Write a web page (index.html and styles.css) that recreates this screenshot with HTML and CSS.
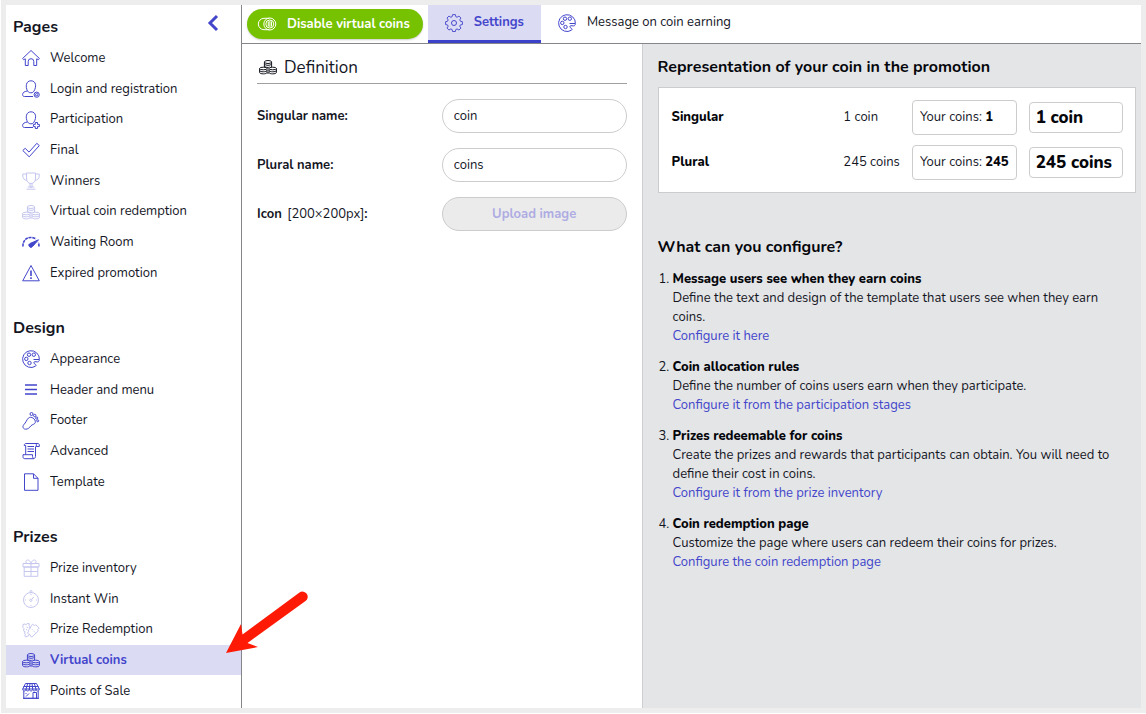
FILE: index.html
```html
<!DOCTYPE html>
<html lang="en">
<head>
    <meta charset="UTF-8">
    <meta name="viewport" content="width=device-width, initial-scale=1.0">
    <title>Virtual coins</title>
    <link rel="stylesheet" href="styles.css">
</head>
<body>
    <svg class="sprite" aria-hidden="true">
        <symbol id="i-home" viewBox="0 0 18 18"><path d="M.6 9.500 9 1.500l8.400 8-1 1.200-1.700-.9V16.500h-2.900V12.500a2.800 2.800 0 0 0-5.600 0v4H3.300V9.800l-1.700.9z"/></symbol>
        <symbol id="i-user" viewBox="0 0 18 18"><path d="M11 16.500H2.500C1 16.500.6 15.500.6 14.500c0-2.200 2-3 4.400-3.400M5.500 11C3.200 6.500 4 .8 9 .8s5.800 5.700 3 10.200M5.500 11c1 1.500 2.500 1.800 3.500 1.800 1.500 0 2.500-.8 3-1.800"/></symbol>
        <symbol id="i-login" viewBox="0 0 18 18"><use href="#i-user"/><circle cx="14.700" cy="14.700" r="2.600"/><circle cx="14.700" cy="14.700" r="1.200"/></symbol>
        <symbol id="i-join" viewBox="0 0 18 18"><use href="#i-user"/><path d="M13.300 11.500h2.200v1.900h1.900v2.200h-1.900v1.900h-2.200v-1.900h-1.900v-2.200h1.900z"/></symbol>
        <symbol id="i-check" viewBox="0 0 18 18"><path d="m.8 9.500 2.400-2.200 3.800 3.800L14.800 2.300l2.500 2.300L7.200 15.800z"/></symbol>
        <symbol id="i-cup" viewBox="0 0 18 18"><path d="M4.500 1h9v5c0 3.500-1.500 5.500-4.500 5.500S4.500 9.500 4.500 6zM4.500 2H.8v2c0 2.500 1.700 4 4.200 4.500M13.500 2h3.700v2c0 2.500-1.700 4-4.200 4.500M8 11.500v3.500h2v-3.500M5.800 15h6.400M4.500 17.200h9"/></symbol>
        <symbol id="i-coins" viewBox="0 0 18 18"><ellipse cx="9" cy="4" rx="3.600" ry="1.500"/><path d="M5.400 4v5M12.600 4v5M5.400 6c1 1.800 6.200 1.800 7.200 0M5.400 8c1 1.500 4 1.900 5.200 1"/><ellipse cx="4.300" cy="10.500" rx="3.700" ry="1.300"/><path d="M.6 10.500v4c0 1.800 7.400 1.800 7.400 0v-4M.6 12.500c0 1.700 7.400 1.700 7.400 0"/><ellipse cx="13.700" cy="10.500" rx="3.700" ry="1.300"/><path d="M10 10.500v4c0 1.800 7.400 1.800 7.400 0v-4M10 12.500c0 1.700 7.400 1.700 7.400 0M8 15h2"/></symbol>
        <symbol id="i-gauge" viewBox="0 0 18 18"><path d="M.9 13.500C.9 7.500 4.300 4.500 9 4.500c2 0 3.700.6 4.900 1.500M17 13.500c0-1.600-.2-2.800-.7-4" stroke-width="1.600" stroke-dasharray="3 .7"/><path d="M16.500 6.800 8 10.500a2 2 0 1 0 2.500 3z" fill="currentColor"/></symbol>
        <symbol id="i-warn" viewBox="0 0 18 18"><path d="M9 1.500 17.300 16.800H.7z"/><path d="M9 6.500v5.500M9 13.300v1.700" stroke-width="1.600"/></symbol>
        <symbol id="i-palette" viewBox="0 0 18 18"><path d="M17.400 9.500A8.400 8.400 0 1 0 13.500 16.200c.9-.6.500-1.600-.5-2.100-1.500-.8-1.500-2.200-.2-2.400l2.700.2c1.300 0 1.900-1 1.900-2.400z"/><circle cx="7" cy="4.700" r="1.700"/><circle cx="11.800" cy="4.700" r="1.700"/><circle cx="4.300" cy="8.900" r="1.700"/><circle cx="7.500" cy="13" r="1.700"/><path d="M11.500 9.500h5.500"/></symbol>
        <symbol id="i-menu" viewBox="0 0 18 18"><path d="M3 4h12M3 8.500h12M3 13h12" stroke-width="1.700"/></symbol>
        <symbol id="i-foot" viewBox="0 0 18 18"><path d="M6.500 6C9 3.800 14 7 13.300 10.500c-.5 2-3 1.800-4.300 3.200-1.500 2-3 3.600-5.500 3.500C1 17 .2 14.500 1.700 12.800 4 10.500 4.500 8 6.500 6z"/><circle cx="9.500" cy="2" r="1.500"/><circle cx="12.700" cy="3.500" r="1.200"/><circle cx="14.700" cy="6" r="1.100"/><circle cx="15.700" cy="8.800" r="1"/></symbol>
        <symbol id="i-scroll" viewBox="0 0 18 18"><path d="M14.300 5V3c0-2 3-2 3 0v1.500h-3M15.800 1.500H4C3 1.500 2.200 2.300 2.200 3.500h1.500v9M13.500 4.500v10c0 2.500-3 2.500-3 0v-1.800H1v2c0 1.300.6 2 1.800 2H12M5.500 4.500h6.500M5.500 7h6.500M5.500 9.500h6.500"/></symbol>
        <symbol id="i-page" viewBox="0 0 18 18"><path d="M2.500.8h9l4.500 4.500v12H2.500zM11.500.8v4.500H16"/></symbol>
        <symbol id="i-gift" viewBox="0 0 18 18"><path d="M1 4.500h16v3.500H1zM2.200 8h13.600v9.300H2.200zM9 4.500v12.800M2.200 12.500h13.600M9 4.500C7 5 3.500 4.500 3.800 2.500 4.200.3 8 .3 9 4.500c1-4.200 4.800-4.200 5.200-2 .3 2-3.200 2.500-5.200 2z"/></symbol>
        <symbol id="i-watch" viewBox="0 0 18 18"><circle cx="9" cy="10" r="7.500"/><circle cx="9" cy="1.500" r="1"/><circle cx="8.800" cy="10.300" r="1.100"/><path d="m9.700 9.500 2-2.500M9 4v1M9 15v1M3 10h1M14 10h1"/></symbol>
        <symbol id="i-ticket" viewBox="0 0 18 18"><path d="M7 14.500 3.500 16 2.800 14.300l1-.8-1.500-1 .8-1.700-1.600-1 .6-2L.8 6.500 1 3.500l2-.6c.3 1.200 1.600 1.200 2-.4l2.500.3-.5 2 1 1-1.200 1.500"/><path d="m9 5.500 1.500-2.300 1.800 1.300 1.500-.7L17.200 7l-1.500 1.600.5 1.400L10 16l-1.500-.8-.3-1.400-1.700-.6-1-1.700 1.300-.8-.5-1.500L7.700 8zM10 8.300l1 1M12 10.300l1 1M4.500 6 6 6.500M4 8.500l1.300.5"/></symbol>
        <symbol id="i-shop" viewBox="0 0 18 18"><path d="M3.500 1.500h11L17.300 7H.7zM.7 7c0 2.600 3.300 2.600 3.300 0 0 2.600 3.300 2.600 3.300 0 0 2.600 3.400 2.600 3.400 0 0 2.600 3.300 2.600 3.300 0 0 2.600 3.300 2.600 3.300 0M4 7l1.700-5.500M7.300 7 8 1.500M10.700 7 10 1.500M14 7l-1.700-5.500M1.800 9v7.300h14.400V9M1 16.300h16M11 16v-5.500h3.500V16M4 14.500l3-3M3.500 12l1-1M1.500 4.500h15"/></symbol>
        <symbol id="i-toggle" viewBox="0 0 20 18"><path d="M12.500 3.300H7a5.700 5.700 0 0 0 0 11.400h5.500"/><circle cx="12.800" cy="9" r="6"/><circle cx="12.800" cy="9" r="4"/><path d="M11.300 6.500v5M12.900 6v6M14.500 6.500v5"/></symbol>
        <symbol id="i-gear" viewBox="0 0 18 18"><path d="M7.500 1h3l.5 2.200 1.300.6 2-1.300 2.100 2.100-1.200 2 .6 1.400 2.200.5v3l-2.200.5-.6 1.300 1.200 2-2.100 2.100-2-1.200-1.300.6-.5 2.200h-3L7 16.800l-1.300-.6-2 1.200-2.100-2.100 1.200-2L2.200 12 .1 11.500v-3L2.200 8l.6-1.400-1.200-2 2.100-2.100 2 1.300L7 3.200z" transform="translate(.500 -.300) scale(.94)"/><circle cx="9" cy="9" r="2.500"/></symbol>
    </svg>

    <div class="app">
        <nav class="sidebar" aria-label="Editor sections">
            <button class="collapse" type="button" aria-label="Collapse menu">
                <svg viewBox="0 0 12 18"><path d="M10 2 3 9l7 7"/></svg>
            </button>
            <section class="group group-pages">
                <h2 class="group-title">Pages</h2>
                <a class="item" href="#welcome"><svg class="icon"><use href="#i-home"/></svg>Welcome</a>
                <a class="item" href="#login"><svg class="icon"><use href="#i-login"/></svg>Login and registration</a>
                <a class="item" href="#participation"><svg class="icon"><use href="#i-join"/></svg>Participation</a>
                <a class="item" href="#final"><svg class="icon"><use href="#i-check"/></svg>Final</a>
                <a class="item" href="#winners"><svg class="icon faded"><use href="#i-cup"/></svg>Winners</a>
                <a class="item" href="#redemption"><svg class="icon faded"><use href="#i-coins"/></svg>Virtual coin redemption</a>
                <a class="item" href="#waiting"><svg class="icon"><use href="#i-gauge"/></svg>Waiting Room</a>
                <a class="item" href="#expired"><svg class="icon"><use href="#i-warn"/></svg>Expired promotion</a>
            </section>
            <section class="group">
                <h2 class="group-title">Design</h2>
                <a class="item" href="#appearance"><svg class="icon"><use href="#i-palette"/></svg>Appearance</a>
                <a class="item" href="#header"><svg class="icon"><use href="#i-menu"/></svg>Header and menu</a>
                <a class="item" href="#footer"><svg class="icon"><use href="#i-foot"/></svg>Footer</a>
                <a class="item" href="#advanced"><svg class="icon"><use href="#i-scroll"/></svg>Advanced</a>
                <a class="item" href="#template"><svg class="icon"><use href="#i-page"/></svg>Template</a>
            </section>
            <section class="group">
                <h2 class="group-title">Prizes</h2>
                <a class="item" href="#inventory"><svg class="icon faded"><use href="#i-gift"/></svg>Prize inventory</a>
                <a class="item" href="#instant"><svg class="icon faded"><use href="#i-watch"/></svg>Instant Win</a>
                <a class="item" href="#prizes"><svg class="icon faded"><use href="#i-ticket"/></svg>Prize Redemption</a>
                <a class="item active" href="#coins" aria-current="page"><svg class="icon"><use href="#i-coins"/></svg>Virtual coins
                    <svg class="arrow" viewBox="0 0 84 64" aria-hidden="true"><path d="M1 63 16 34l1.500 10.500L74.500 2.500a5 5 0 0 1 6 8.500L22.500 53 33 57z"/></svg>
                </a>
                <a class="item" href="#pos"><svg class="icon"><use href="#i-shop"/></svg>Points of Sale</a>
            </section>
        </nav>

        <main class="main">
            <div class="tabs">
                <button class="disable" type="button"><svg class="icon icon-wide"><use href="#i-toggle"/></svg>Disable virtual coins</button>
                <a class="tab active" href="#settings"><svg class="icon"><use href="#i-gear"/></svg>Settings</a>
                <a class="tab" href="#message"><svg class="icon"><use href="#i-palette"/></svg>Message on coin earning</a>
            </div>

            <div class="columns">
                <form class="definition">
                    <h1 class="form-title"><svg class="icon"><use href="#i-coins"/></svg>Definition</h1>
                    <div class="field">
                        <label for="singular">Singular name:</label>
                        <input class="control" type="text" id="singular" value="coin">
                    </div>
                    <div class="field">
                        <label for="plural">Plural name:</label>
                        <input class="control" type="text" id="plural" value="coins">
                    </div>
                    <div class="field">
                        <label for="upload">Icon <span class="hint">[200×200px]</span>:</label>
                        <button class="control upload" type="button" id="upload" disabled>Upload image</button>
                    </div>
                </form>

                <aside class="help">
                    <h2 class="help-title">Representation of your coin in the promotion</h2>
                    <div class="card">
                        <table class="preview">
                            <tr>
                                <th scope="row">Singular</th>
                                <td>1 coin</td>
                                <td><div class="chip">Your coins: <b>1</b></div></td>
                                <td><div class="chip chip-big">1 coin</div></td>
                            </tr>
                            <tr>
                                <th scope="row">Plural</th>
                                <td>245 coins</td>
                                <td><div class="chip">Your coins: <b>245</b></div></td>
                                <td><div class="chip chip-big">245 coins</div></td>
                            </tr>
                        </table>
                    </div>

                    <h2 class="help-title">What can you configure?</h2>
                    <ol class="steps">
                        <li>
                            <b>Message users see when they earn coins</b>
                            <p>Define the text and design of the template that users see when they earn coins.</p>
                            <a href="#message">Configure it here</a>
                        </li>
                        <li>
                            <b>Coin allocation rules</b>
                            <p>Define the number of coins users earn when they participate.</p>
                            <a href="#participation">Configure it from the participation stages</a>
                        </li>
                        <li>
                            <b>Prizes redeemable for coins</b>
                            <p>Create the prizes and rewards that participants can obtain. You will need to define their cost in coins.</p>
                            <a href="#inventory">Configure it from the prize inventory</a>
                        </li>
                        <li>
                            <b>Coin redemption page</b>
                            <p>Customize the page where users can redeem their coins for prizes.</p>
                            <a href="#redemption">Configure the coin redemption page</a>
                        </li>
                    </ol>
                </aside>
            </div>
        </main>
    </div>
</body>
</html>
```
FILE: styles.css
```css
* {
    box-sizing: border-box;
}
html {
    background: white;
}
body {
    margin: 0;
    padding: 0 0 1px 1px;
    font-family: "Nunito", "Open Sans", sans-serif;
    font-size: 13px;
    line-height: 19px;
    color: #14161f;
}
h1, h2, p {
    margin: 0;
}
a {
    color: #4346cb;
    text-decoration: none;
}
b, th {
    color: #06070c;
    font-weight: 800;
}
button, input {
    font: inherit;
}
.sprite {
    position: absolute;
    width: 0;
    height: 0;
}
.app {
    display: flex;
    min-height: calc(100vh - 1px);
    padding: 5px;
    background: #ededed;
}

/* icons */
.icon {
    width: 18px;
    height: 18px;
    flex: none;
    fill: none;
    stroke: currentColor;
    stroke-width: 1;
    color: #4346cb;
}
.icon-wide {
    width: 20px;
    color: white;
}
.faded {
    opacity: 0.3;
}

/* sidebar */
.sidebar {
    position: relative;
    display: flex;
    flex-direction: column;
    gap: 25px;
    width: 236px;
    flex: none;
    padding: 7px 0 2px;
    background: white;
    border-right: 1px solid #85868a;
}
.collapse {
    position: absolute;
    top: 9px;
    right: 22px;
    width: 12px;
    height: 18px;
    padding: 0;
    border: none;
    background: none;
    cursor: pointer;
}
.collapse svg {
    display: block;
    fill: none;
    stroke: #4346cb;
    stroke-width: 3;
}
.group {
    display: grid;
    grid-auto-rows: 1fr;
    flex: 6;
}
.group-pages {
    flex: 9;
}
.group-title {
    display: flex;
    align-items: center;
    padding-left: 7px;
    font-size: 16px;
    font-weight: 700;
}
.item {
    position: relative;
    display: flex;
    align-items: center;
    gap: 10px;
    padding: 1px 0 0 16px;
    color: #14161f;
}
.item.active {
    background: #dcdbf4;
    color: #4346cb;
    font-weight: 700;
}
.arrow {
    position: absolute;
    z-index: 1;
    top: -55px;
    right: -68px;
    width: 84px;
    height: 64px;
    fill: #ff1a05;
}

/* top bar */
.main {
    display: flex;
    flex-direction: column;
    flex: 1;
    min-width: 0;
    background: white;
}
.tabs {
    display: flex;
    align-items: stretch;
    height: 39px;
    border-bottom: 1px solid #85868a;
}
.disable {
    display: flex;
    align-items: center;
    align-self: center;
    gap: 10px;
    height: 30px;
    margin: 0 5px;
    padding: 0 13px 0 10px;
    border: none;
    border-radius: 15px;
    background: #76c200;
    box-shadow: 0 1px 2px #cccccc;
    color: white;
    font-weight: 700;
    cursor: pointer;
}
.tab {
    display: flex;
    align-items: center;
    gap: 11px;
    padding: 0 17px;
    border-bottom: 3px solid transparent;
    color: #14161f;
}
.tab.active {
    background: #dcdbf4;
    border-color: #3c41c9;
    color: #4346cb;
    font-weight: 700;
}

/* form */
.columns {
    display: grid;
    grid-template-columns: 4fr 5fr;
    flex: 1;
}
.definition {
    display: flex;
    flex-direction: column;
    gap: 15px;
    padding: 7px 15px;
}
.form-title {
    display: flex;
    align-items: center;
    gap: 7px;
    height: 33px;
    padding-left: 2px;
    border-bottom: 1px solid #a0a0a0;
    font-size: 17px;
    font-weight: 400;
}
.form-title .icon {
    color: #14161f;
}
.field {
    display: grid;
    grid-template-columns: 1fr 1fr;
    align-items: center;
}
.field label {
    font-weight: 700;
}
.hint {
    margin-left: 2px;
    font-weight: 400;
}
.control {
    width: 100%;
    height: 34px;
    padding: 0 11px;
    border: 1px solid #cccccc;
    border-radius: 17px;
    background: white;
    color: #14161f;
}
.upload {
    background: #ebebeb;
    color: #aeabe3;
    font-weight: 700;
}

/* help panel */
.help {
    padding: 12px 5px 12px 15px;
    background: #e4e5e7;
    border-left: 1px solid #cdced1;
}
.help-title {
    color: #06070c;
    font-size: 16px;
    line-height: 22px;
    font-weight: 700;
}
.card {
    margin: 9px 0 43px;
    padding: 7px 6px 7px 13px;
    background: white;
    border: 1px solid #cccccc;
}
.preview {
    width: 100%;
    border-collapse: collapse;
}
.preview th {
    width: 99%;
    padding: 0;
    text-align: left;
}
.preview td {
    height: 45px;
    padding: 0 6px;
    white-space: nowrap;
}
.chip {
    padding: 7px;
    border: 1px solid #cccccc;
    border-radius: 4px;
}
.chip-big {
    padding: 5px 10px 5px 6px;
    color: #06070c;
    font-size: 17px;
    font-weight: 800;
}
.steps {
    display: flex;
    flex-direction: column;
    gap: 12px;
    margin: 12px 0 0;
    padding: 0 10px 0 15px;
}
```
